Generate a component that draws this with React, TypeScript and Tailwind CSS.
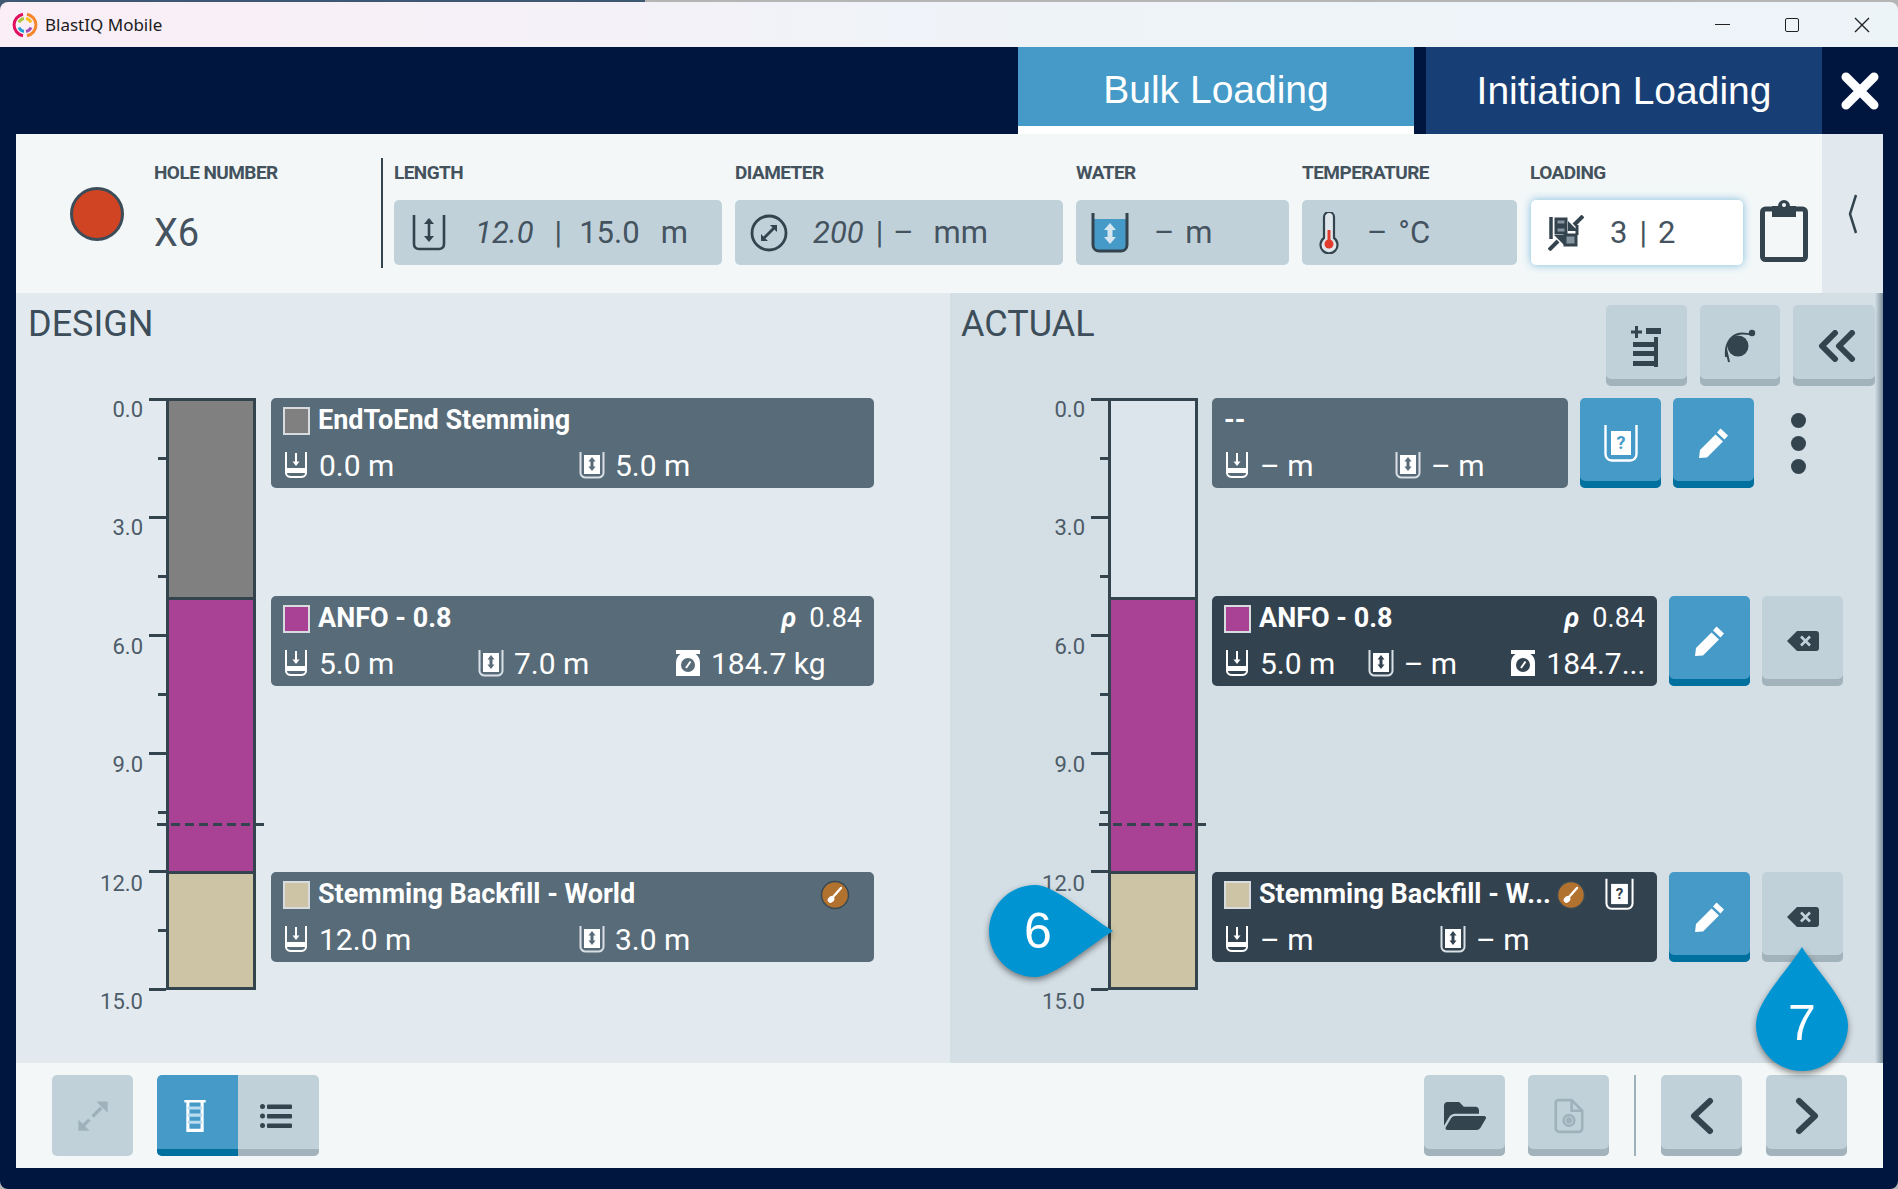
import React from 'react';
import { FaFolderOpen } from 'react-icons/fa';

const SCALE_LABELS = ['0.0', '3.0', '6.0', '9.0', '12.0', '15.0'];

function Logo() {
  return (
    <svg width="26" height="26" viewBox="0 0 26 26" fill="none">
      <path d="M11 2.2A11 11 0 0 0 11 23.8" stroke="#e0105f" strokeWidth="3" />
      <path d="M15 2.2A11 11 0 0 1 15 23.8" stroke="#f5862a" strokeWidth="3" />
      <path d="M7 10.5A6.5 6.5 0 0 1 12 6.6" stroke="#a8c83a" strokeWidth="3" />
      <path d="M14 6.6A6.5 6.5 0 0 1 19 10.5" stroke="#f4c020" strokeWidth="3" />
      <path d="M7 15.5A6.5 6.5 0 0 0 12 19.4" stroke="#1f9fd8" strokeWidth="3" />
      <path d="M14 19.4A6.5 6.5 0 0 0 19 15.5" stroke="#a04bb8" strokeWidth="3" />
    </svg>
  );
}

function CupDepthIcon() {
  return (
    <svg width="24" height="28" viewBox="0 0 24 28" fill="none" stroke="#fff" strokeWidth="2">
      <path d="M2 1v21c0 3 3 4 5 4h10c2 0 5-1 5-4V1" />
      <path d="M12 2v11" />
      <path d="M8.5 10.5 12 15l3.5-4.5z" fill="#fff" stroke="none" />
      <rect x="3" y="17" width="18" height="5" fill="#fff" stroke="none" />
    </svg>
  );
}

function CupLengthIcon({ notch }: { notch: string }) {
  return (
    <svg width="26" height="28" viewBox="0 0 26 28" fill="none" stroke="#d9e1e6" strokeWidth="2">
      <path d="M1.5 1v21c0 3 3 4.500 5 4.500h13c2 0 5-1.500 5-4.500V1" />
      <rect x="5" y="4" width="16" height="19" fill="#fff" stroke="none" />
      <path d="M13 6l3.500 4.500H14.500v5H16.500L13 20l-3.500-4.500h2v-5h-2z" fill={notch} stroke="none" />
    </svg>
  );
}

function WeightIcon({ notch }: { notch: string }) {
  return (
    <svg width="26" height="28" viewBox="0 0 26 28">
      <path d="M1 1h24v4h-4.500a11 11 0 0 1 4.500 9v13H1V14a11 11 0 0 1 4.500-9H1z" fill="#fff" />
      <circle cx="13" cy="16" r="7" fill={notch} />
      <path d="M11 19 15.500 12.500" stroke="#fff" strokeWidth="2" />
    </svg>
  );
}

function Rho() {
  return <span className="font-bold italic">ρ</span>;
}

function SpoonBadge() {
  return (
    <svg width="30" height="30" viewBox="0 0 30 30">
      <circle cx="15" cy="15" r="13.500" fill="#b1712f" stroke="#3a4a55" strokeWidth="1.500" />
      <path d="M21 8 13 17" stroke="#fff" strokeWidth="2.400" strokeLinecap="round" />
      <ellipse cx="11" cy="19.500" rx="3.600" ry="3" fill="#fff" transform="rotate(-45 11 19.500)" />
    </svg>
  );
}

function UnknownCupIcon({ width, height, mark }: { width: number; height: number; mark: string }) {
  return (
    <svg width={width} height={height} viewBox="0 0 34 38" fill="none" stroke="#fff" strokeWidth="2.400">
      <path d="M1.500 1v29c0 4 3 6.500 6 6.500h19c3 0 6-2.500 6-6.500V1" />
      <rect x="7" y="7" width="20" height="24" fill="#fff" stroke="none" />
      <text x="17" y="25" textAnchor="middle" fontSize="18" fontWeight="700" fill={mark} stroke="none" fontFamily="Roboto, sans-serif">
        ?
      </text>
    </svg>
  );
}

function PencilIcon() {
  return (
    <svg width="34" height="34" viewBox="0 0 34 34">
      <path d="M23.500 2.500 31 9.500 27.500 13.500 20 6.500z" fill="#fff" />
      <path d="M18.500 8.500 26 15.500 10 31.500 2 32 3 24z" fill="#fff" />
    </svg>
  );
}

function BackspaceIcon() {
  return (
    <svg width="32" height="20" viewBox="0 0 32 20">
      <path d="M10 0h19a3 3 0 0 1 3 3v14a3 3 0 0 1-3 3H10L0 10z" fill="#34444f" />
      <path d="M14 5.500 23 14.500M23 5.500 14 14.500" stroke="#c1d1da" strokeWidth="2.600" />
    </svg>
  );
}

function ActionButton({ tone, className, children }: { tone: 'blue' | 'grey'; className: string; children: React.ReactNode }) {
  return (
    <div
      className={`${className} ${
        tone === 'blue' ? 'bg-[#459ac8] shadow-[inset_0_-7px_0_#00709f]' : 'bg-[#c1d1da] shadow-[inset_0_-7px_0_#a2b3bc]'
      } flex items-center justify-center rounded-[5px]`}
    >
      {children}
    </div>
  );
}

function Stat({ icon, value, className }: { icon: React.ReactNode; value: string; className: string }) {
  return (
    <div className={`${className} flex items-center gap-[10px] overflow-hidden`}>
      <span className="flex w-[26px] shrink-0 justify-center">{icon}</span>
      <span className="whitespace-nowrap">{value}</span>
    </div>
  );
}

function Card({
  title,
  swatch,
  className,
  right,
  children,
}: {
  title: string;
  swatch?: string;
  className: string;
  right?: React.ReactNode;
  children: React.ReactNode;
}) {
  return (
    <div className={`${className} flex h-[90px] flex-col rounded-[5px] px-[12px] pt-[9px] text-white`}>
      <div className="flex h-[27px] items-center">
        {swatch && <span className={`${swatch} mr-[8px] h-[28px] w-[27px] shrink-0 border-2 border-[#d8dcdf]`} />}
        <span className="whitespace-nowrap text-[27px] font-bold">{title}</span>
        {right && <div className="ml-auto flex items-center text-[27px]">{right}</div>}
      </div>
      <div className="mt-[17px] flex h-[28px] items-center text-[30px]">{children}</div>
    </div>
  );
}

function Scale({ className }: { className: string }) {
  const ticks = Array.from({ length: 11 }, (_, i) => i);
  return (
    <div className={`${className} relative h-[592px] shrink-0`}>
      {ticks.map((i) => (
        <div
          key={i}
          className={`${i % 2 === 0 ? 'w-[17px]' : 'w-[8px]'} absolute right-0 h-[3px] bg-[#34444f]`}
          style={{ top: i * 59 }}
        />
      ))}
      {SCALE_LABELS.map((label, i) => (
        <div
          key={label}
          className="absolute right-[23px] text-[22px] leading-[24px] text-[#4d5c68]"
          style={{ top: i * 118.4 }}
        >
          {label}
        </div>
      ))}
    </div>
  );
}

function Bar({ topColor }: { topColor: string }) {
  return (
    <div className="relative h-[592px] w-[90px] shrink-0">
      <div className="flex h-full flex-col border-[3px] border-[#34444f]">
        <div className={`${topColor} h-[199px] border-b-[3px] border-[#34444f]`} />
        <div className="h-[274px] border-b-[3px] border-[#34444f] bg-[#a94195]" />
        <div className="flex-1 bg-[#ccc4a4]" />
      </div>
      <div className="absolute left-[-9px] top-[425px] h-[3px] w-[108px] bg-[repeating-linear-gradient(90deg,#34444f_0_9px,transparent_9px_14px)]" />
    </div>
  );
}

function FieldIconLength() {
  return (
    <svg width="34" height="36" viewBox="0 0 34 36" fill="none" stroke="#34444f" strokeWidth="2.600">
      <path d="M2 0v29c0 3 2 5 5 5h20c3 0 5-2 5-5V0" />
      <path d="M17 4v21" />
      <path d="M12 9l5-6 5 6zM12 21l5 6 5-6z" fill="#34444f" stroke="none" />
    </svg>
  );
}

function FieldIconDiameter() {
  return (
    <svg width="38" height="38" viewBox="0 0 38 38" fill="none" stroke="#34444f" strokeWidth="2.800">
      <circle cx="19" cy="19" r="17" />
      <path d="M13 25 24.500 13.500" />
      <path d="M27 11h-7l7 7zM11 27h7l-7-7z" fill="#34444f" stroke="none" />
    </svg>
  );
}

function FieldIconWater() {
  return (
    <svg width="38" height="42" viewBox="0 0 38 42" fill="none">
      <path d="M3 7h32v27c0 3-2 5-5 5H8c-3 0-5-2-5-5z" fill="#459ac8" />
      <path d="M2 1v32c0 4 3 6 6 6h22c3 0 6-2 6-6V1" stroke="#34444f" strokeWidth="3" />
      <path d="M19 11l6 7h-3.500v7H25l-6 7-6-7h3.500v-7H13z" fill="#d5e6ef" />
    </svg>
  );
}

function FieldIconThermometer() {
  return (
    <svg width="22" height="42" viewBox="0 0 22 42" fill="none">
      <path d="M6 5a5 5 0 0 1 10 0v21a8.500 8.500 0 1 1-10 0z" fill="#dfe7ec" stroke="#34444f" strokeWidth="2.200" />
      <path d="M11 18v14" stroke="#e23c2e" strokeWidth="3" />
      <circle cx="11" cy="32" r="4.500" fill="#e23c2e" />
    </svg>
  );
}

function FieldIconLoading() {
  return (
    <svg width="36" height="36" viewBox="0 0 36 36" fill="none" stroke="#34444f">
      <path d="M3 2v22" strokeWidth="3.500" />
      <path d="M8 4h10v6H8zM8 12h10v6H8z" fill="#8795a0" strokeWidth="3" />
      <path d="M17 20h11v10H17z" fill="#8795a0" strokeWidth="3" />
      <path d="M29 10v10" strokeWidth="3" />
      <path d="M35 1 26 10" strokeWidth="4" />
      <path d="M20 6v10h10z" fill="#34444f" stroke="none" />
      <path d="M1 35 10 26" strokeWidth="4" />
      <path d="M16 30V20H6z" fill="#34444f" stroke="none" />
    </svg>
  );
}

function ClipboardIcon() {
  return (
    <svg width="48" height="64" viewBox="0 0 48 64" fill="none">
      <rect x="2.500" y="11" width="43" height="50.500" rx="3" fill="#f3f7f8" stroke="#34444f" strokeWidth="5" />
      <path d="M12 8h6a6 6 0 0 1 12 0h6v11H12z" fill="#34444f" />
      <circle cx="24" cy="7" r="2" fill="#f3f7f8" />
    </svg>
  );
}

function Field({ className, children }: { className: string; children: React.ReactNode }) {
  return (
    <div className={`${className} flex h-[65px] items-center rounded-[5px] bg-[#c1d1da] text-[31px] text-[#44535f]`}>
      {children}
    </div>
  );
}

function HeaderLabel({ children }: { children: React.ReactNode }) {
  return <div className="h-[24px] text-[19px] font-bold leading-[24px] tracking-[-0.55px] text-[#44525d]">{children}</div>;
}

function HeaderColumn({ label, children }: { label: string; children: React.ReactNode }) {
  return (
    <div className="flex flex-col">
      <HeaderLabel>{label}</HeaderLabel>
      <div className="mt-[15px]">{children}</div>
    </div>
  );
}

function ButtonRow({ children }: { children: React.ReactNode }) {
  return <div className="flex h-[90px] items-stretch">{children}</div>;
}

export default function App() {
  return (
    <div className="relative flex h-[1189px] w-[1898px] flex-col overflow-hidden bg-[#b5b5b5] font-['Roboto',sans-serif]">
      {/* title bar */}
      <div className="h-[47px] shrink-0 bg-[linear-gradient(90deg,#3d5870_34%,#b5b5b5_34%)] pt-[2px]">
        <div className="flex h-[45px] items-center rounded-t-[8px] bg-gradient-to-r from-[#fbeef6] via-[#eff3f8] to-[#edf4f8] pl-[12px]">
          <Logo />
          <span className="ml-[7px] font-['Noto_Sans',sans-serif] text-[17px] text-[#1b1b1b]">BlastIQ Mobile</span>
          <div className="ml-auto flex items-center pr-[1px]">
            <div className="flex h-[45px] w-[70px] items-center justify-center">
              <div className="h-[1.5px] w-[15px] bg-[#222]" />
            </div>
            <div className="flex h-[45px] w-[70px] items-center justify-center">
              <div className="h-[14px] w-[14px] rounded-[2px] border-[1.5px] border-[#222]" />
            </div>
            <div className="flex h-[45px] w-[70px] items-center justify-center">
              <svg width="16" height="16" viewBox="0 0 16 16" stroke="#222" strokeWidth="1.400">
                <path d="M1 1l14 14M15 1 1 15" />
              </svg>
            </div>
          </div>
        </div>
      </div>

      <div className="flex flex-1 flex-col rounded-b-[8px] bg-[#00163f]">
        {/* tabs */}
        <div className="flex h-[87px] shrink-0 pl-[1018px] font-['Liberation_Sans',sans-serif] text-[39px] text-white">
          <div className="flex w-[396px] items-center justify-center border-b-[8px] border-white bg-[#459ac8] pt-[8px]">
            Bulk Loading
          </div>
          <div className="ml-[12px] flex w-[396px] items-center justify-center bg-[#183f75] pt-[2px]">Initiation Loading</div>
          <div className="flex w-[76px] items-center justify-center">
            <svg width="38" height="38" viewBox="0 0 38 38" stroke="#fff" strokeWidth="9" strokeLinecap="round">
              <path d="M5 5l28 28M33 5 5 33" />
            </svg>
          </div>
        </div>

        <div className="ml-[16px] flex h-[1034px] w-[1867px] flex-col">
          {/* hole header */}
          <div className="flex h-[159px] shrink-0 bg-[#f3f7f8]">
            <div className="flex h-full w-[365px] shrink-0">
              <div className="ml-[54px] mt-[53px] h-[54px] w-[54px] rounded-full border-[3px] border-[#3c4c58] bg-[#d04424]" />
              <div className="ml-[30px] flex flex-col pt-[27px]">
                <HeaderLabel>HOLE NUMBER</HeaderLabel>
                <div className="mt-[25px] text-[38px] leading-[46px] text-[#44535f]">X6</div>
              </div>
            </div>
            <div className="mt-[24px] h-[110px] w-[2px] shrink-0 bg-[#34444f]" />
            <div className="ml-[11px] flex gap-[13px] pt-[27px]">
              <HeaderColumn label="LENGTH">
                <Field className="w-[328px] pl-[18px] pt-[1px]">
                  <FieldIconLength />
                  <span className="ml-[29px] italic">12.0</span>
                  <span className="ml-[21px]">|</span>
                  <span className="ml-[17px]">15.0</span>
                  <span className="ml-[21px]">m</span>
                </Field>
              </HeaderColumn>
              <HeaderColumn label="DIAMETER">
                <Field className="w-[328px] pl-[15px] pt-[1px]">
                  <FieldIconDiameter />
                  <span className="ml-[25px] italic">200</span>
                  <span className="ml-[12px]">|</span>
                  <span className="ml-[10px]">–</span>
                  <span className="ml-[20px]">mm</span>
                </Field>
              </HeaderColumn>
              <HeaderColumn label="WATER">
                <Field className="w-[213px] pl-[15px] pt-[1px]">
                  <FieldIconWater />
                  <span className="ml-[25px]">–</span>
                  <span className="ml-[11px]">m</span>
                </Field>
              </HeaderColumn>
              <HeaderColumn label="TEMPERATURE">
                <Field className="w-[215px] pl-[16px] pt-[1px]">
                  <FieldIconThermometer />
                  <span className="ml-[27px]">–</span>
                  <span className="ml-[11px]">°C</span>
                </Field>
              </HeaderColumn>
              <HeaderColumn label="LOADING">
                <div className="ml-[1px] flex h-[65px] w-[212px] items-center rounded-[5px] bg-white pl-[17px] pt-[1px] text-[31px] text-[#44535f] shadow-[0_0_8px_#7cbbdc]">
                  <FieldIconLoading />
                  <span className="ml-[26px]">3</span>
                  <span className="ml-[12px]">|</span>
                  <span className="ml-[11px]">2</span>
                </div>
              </HeaderColumn>
              <div className="ml-[4px] mt-[37px]">
                <ClipboardIcon />
              </div>
            </div>
            <div className="ml-auto flex w-[61px] justify-start bg-[#e1e9ef] pl-[26px] pt-[60px]">
              <svg width="10" height="40" viewBox="0 0 10 40" fill="none" stroke="#34444f" strokeWidth="2.500">
                <path d="M8 1 2 20l6 19" />
              </svg>
            </div>
          </div>

          {/* design / actual */}
          <div className="flex h-[770px] shrink-0">
            <div className="w-[934px] shrink-0 bg-[#e2eaf0]">
              <div className="h-[105px] pl-[12px] pt-[7px] text-[36px] leading-[48px] text-[#3d4e5a]">DESIGN</div>
              <div className="flex">
                <Scale className="w-[150px]" />
                <Bar topColor="bg-[#808080]" />
                <div className="ml-[15px] flex flex-col">
                  <Card title="EndToEnd Stemming" swatch="bg-[#808080]" className="w-[603px] bg-[#586b78]">
                    <Stat className="w-[296px]" icon={<CupDepthIcon />} value="0.0 m" />
                    <Stat className="w-[280px]" icon={<CupLengthIcon notch="#586b78" />} value="5.0 m" />
                  </Card>
                  <Card
                    title="ANFO - 0.8"
                    swatch="bg-[#a94195]"
                    className="mt-[108px] w-[603px] bg-[#586b78]"
                    right={
                      <>
                        <Rho />
                        <span className="ml-[13px]">0.84</span>
                      </>
                    }
                  >
                    <Stat className="w-[195px]" icon={<CupDepthIcon />} value="5.0 m" />
                    <Stat className="w-[197px]" icon={<CupLengthIcon notch="#586b78" />} value="7.0 m" />
                    <Stat className="w-[180px]" icon={<WeightIcon notch="#586b78" />} value="184.7 kg" />
                  </Card>
                  <Card
                    title="Stemming Backfill - World"
                    swatch="bg-[#ccc4a4]"
                    className="mt-[186px] w-[603px] bg-[#586b78]"
                    right={
                      <span className="mr-[12px] flex">
                        <SpoonBadge />
                      </span>
                    }
                  >
                    <Stat className="w-[296px]" icon={<CupDepthIcon />} value="12.0 m" />
                    <Stat className="w-[280px]" icon={<CupLengthIcon notch="#586b78" />} value="3.0 m" />
                  </Card>
                </div>
              </div>
            </div>

            <div className="relative w-[933px] shrink-0 bg-[#d3dee5]">
              <div className="flex h-[105px] pt-[12px]">
                <div className="pl-[11px] pt-[1px] text-[36px] leading-[36px] text-[#3d4e5a]">ACTUAL</div>
                <div className="ml-auto flex gap-[13px] pr-[8px]">
                  <ActionButton tone="grey" className="h-[81px] w-[81px]">
                    <svg width="32" height="42" viewBox="0 0 32 42" fill="#34444f">
                      <path d="M0 5.500h11v3H0zM4 1h3v12H4zM15 3h15v6H15zM23 12h4v30H23zM2 17h24v5H2zM2 26h24v5H2zM2 36h24v5H2z" />
                    </svg>
                  </ActionButton>
                  <ActionButton tone="grey" className="h-[81px] w-[80px]">
                    <svg width="32" height="34" viewBox="0 0 32 34" fill="none">
                      <circle cx="14" cy="17" r="10.500" fill="#34444f" />
                      <path d="M2 28 C1 18 4 8 14 5 C20 3 28 7 27 4" stroke="#34444f" strokeWidth="2" />
                      <path d="M2 20l3 13" stroke="#34444f" strokeWidth="2" />
                      <circle cx="28" cy="4" r="3.200" fill="#34444f" />
                    </svg>
                  </ActionButton>
                  <ActionButton tone="grey" className="h-[81px] w-[82px] pl-[5px]">
                    <svg width="38" height="32" viewBox="0 0 38 32" fill="none" stroke="#34444f" strokeWidth="6" strokeLinecap="round" strokeLinejoin="round">
                      <path d="M17 3 4 16l13 13M34 3 21 16l13 13" />
                    </svg>
                  </ActionButton>
                </div>
              </div>
              <div className="flex">
                <Scale className="w-[158px]" />
                <Bar topColor="bg-[#dbe5eb]" />
                <div className="ml-[14px] flex flex-col">
                  <div className="flex">
                    <Card title="--" className="w-[356px] bg-[#586b78]">
                      <Stat className="w-[171px]" icon={<CupDepthIcon />} value="– m" />
                      <Stat className="w-[150px]" icon={<CupLengthIcon notch="#586b78" />} value="– m" />
                    </Card>
                    <ButtonRow>
                      <ActionButton tone="blue" className="ml-[12px] w-[81px]">
                        <UnknownCupIcon width={34} height={38} mark="#459ac8" />
                      </ActionButton>
                      <ActionButton tone="blue" className="ml-[12px] w-[81px]">
                        <PencilIcon />
                      </ActionButton>
                      <div className="ml-[37px] flex flex-col gap-[8px] pt-[15px]">
                        <div className="h-[15px] w-[15px] rounded-full bg-[#34444f]" />
                        <div className="h-[15px] w-[15px] rounded-full bg-[#34444f]" />
                        <div className="h-[15px] w-[15px] rounded-full bg-[#34444f]" />
                      </div>
                    </ButtonRow>
                  </div>
                  <div className="mt-[108px] flex">
                    <Card
                      title="ANFO - 0.8"
                      swatch="bg-[#a94195]"
                      className="w-[445px] bg-[#33424f]"
                      right={
                        <>
                          <Rho />
                          <span className="ml-[13px]">0.84</span>
                        </>
                      }
                    >
                      <Stat className="w-[144px]" icon={<CupDepthIcon />} value="5.0 m" />
                      <Stat className="w-[143px]" icon={<CupLengthIcon notch="#33424f" />} value="– m" />
                      <Stat className="w-[135px]" icon={<WeightIcon notch="#33424f" />} value="184.7..." />
                    </Card>
                    <ButtonRow>
                      <ActionButton tone="blue" className="ml-[12px] w-[81px]">
                        <PencilIcon />
                      </ActionButton>
                      <ActionButton tone="grey" className="ml-[12px] w-[81px]">
                        <BackspaceIcon />
                      </ActionButton>
                    </ButtonRow>
                  </div>
                  <div className="mt-[186px] flex">
                    <Card
                      title="Stemming Backfill - W..."
                      swatch="bg-[#ccc4a4]"
                      className="w-[445px] bg-[#33424f]"
                      right={
                        <span className="mr-[11px] flex items-center">
                          <SpoonBadge />
                          <span className="ml-[19px] mt-[-2px] flex">
                            <UnknownCupIcon width={29} height={32} mark="#33424f" />
                          </span>
                        </span>
                      }
                    >
                      <Stat className="w-[216px]" icon={<CupDepthIcon />} value="– m" />
                      <Stat className="w-[150px]" icon={<CupLengthIcon notch="#33424f" />} value="– m" />
                    </Card>
                    <ButtonRow>
                      <ActionButton tone="blue" className="ml-[12px] w-[81px]">
                        <PencilIcon />
                      </ActionButton>
                      <ActionButton tone="grey" className="ml-[12px] w-[81px]">
                        <BackspaceIcon />
                      </ActionButton>
                    </ButtonRow>
                  </div>
                </div>
              </div>
              <div className="absolute bottom-0 right-0 top-0 w-[8px] bg-gradient-to-r from-transparent to-[#7d8f9b]" />
            </div>
          </div>

          {/* footer */}
          <div className="flex h-[105px] shrink-0 items-start bg-[#f3f7f8] pt-[12px]">
            <div className="ml-[36px] flex h-[81px] w-[81px] items-center justify-center rounded-[5px] bg-[#c1d1da]">
              <svg width="36" height="36" viewBox="0 0 32 32" fill="none" stroke="#9fb2bc" strokeWidth="3">
                <path d="M5 27 27 5" strokeDasharray="11 4" />
                <path d="M19 3h10v10zM3 19v10h10z" fill="#9fb2bc" stroke="none" />
              </svg>
            </div>
            <div className="ml-[24px] flex h-[81px] w-[162px] overflow-hidden rounded-[5px]">
              <div className="flex w-[81px] items-center justify-center bg-[#459ac8] pr-[6px] shadow-[inset_0_-7px_0_#00709f]">
                <svg width="26" height="32" viewBox="0 0 26 36" fill="none" stroke="#fff" strokeWidth="3.500">
                  <path d="M1 1h24M5 1v34h16V1" />
                  <path d="M5 9h16M5 17h16M5 25h16" stroke="#b9dcee" />
                  <path d="M4 34h18" />
                </svg>
              </div>
              <div className="flex w-[81px] items-center justify-center bg-[#c1d1da] pr-[6px] shadow-[inset_0_-7px_0_#a2b3bc]">
                <svg width="32" height="26" viewBox="0 0 32 26" fill="#34444f">
                  <circle cx="2.500" cy="3.500" r="2.500" />
                  <circle cx="2.500" cy="13" r="2.500" />
                  <circle cx="2.500" cy="22.500" r="2.500" />
                  <rect x="7" y="1.500" width="25" height="4.500" rx="1" />
                  <rect x="7" y="11" width="25" height="4.500" rx="1" />
                  <rect x="7" y="20.500" width="25" height="4.500" rx="1" />
                </svg>
              </div>
            </div>
            <div className="ml-auto flex items-start pr-[36px]">
              <ActionButton tone="grey" className="h-[81px] w-[81px]">
                <FaFolderOpen className="text-[#34444f]" size={42} />
              </ActionButton>
              <div className="ml-[23px] flex h-[81px] w-[81px] items-center justify-center rounded-[5px] bg-[#c1d1da] shadow-[inset_0_-7px_0_#a2b3bc]">
                <svg width="30" height="38" viewBox="0 0 34 40" fill="none" stroke="#9fb2bc" strokeWidth="3">
                  <path d="M4 2h16l12 12v20a4 4 0 0 1-4 4H6a4 4 0 0 1-4-4V4z" />
                  <path d="M20 2v12h12" />
                  <circle cx="17" cy="25" r="6" />
                  <circle cx="17" cy="25" r="2" fill="#9fb2bc" />
                </svg>
              </div>
              <div className="ml-[25px] h-[81px] w-[2px] bg-[#9fb2bc]" />
              <ActionButton tone="grey" className="ml-[25px] h-[81px] w-[81px]">
                <svg width="28" height="38" viewBox="0 0 26 38" fill="none" stroke="#34444f" strokeWidth="6" strokeLinecap="round" strokeLinejoin="round">
                  <path d="M21 4 5 19l16 15" />
                </svg>
              </ActionButton>
              <ActionButton tone="grey" className="ml-[24px] h-[81px] w-[81px]">
                <svg width="28" height="38" viewBox="0 0 26 38" fill="none" stroke="#34444f" strokeWidth="6" strokeLinecap="round" strokeLinejoin="round">
                  <path d="M5 4l16 15L5 34" />
                </svg>
              </ActionButton>
            </div>
          </div>
        </div>
      </div>

      {/* callouts */}
      <div className="absolute left-[989px] top-[885px] h-[92px] w-[125px] drop-shadow-[0_3px_3px_rgba(0,0,0,0.45)]">
        <svg width="125" height="92" viewBox="0 0 125 92" className="absolute left-0 top-0">
          <path d="M46 0C66 0 98 30 124 46 98 62 66 92 46 92A46 46 0 0 1 46 0z" fill="#0095d2" />
        </svg>
        <div className="absolute left-0 top-0 flex h-[92px] w-[98px] items-center justify-center font-['Liberation_Sans',sans-serif] text-[50px] text-white">
          6
        </div>
      </div>
      <div className="absolute left-[1756px] top-[947px] h-[124px] w-[92px] drop-shadow-[0_3px_3px_rgba(0,0,0,0.45)]">
        <svg width="92" height="124" viewBox="0 0 92 124" className="absolute left-0 top-0">
          <path d="M46 0C62 26 92 54 92 78A46 46 0 0 1 0 78C0 54 30 26 46 0z" fill="#0095d2" />
        </svg>
        <div className="absolute left-0 top-[46px] flex h-[60px] w-[92px] items-center justify-center font-['Liberation_Sans',sans-serif] text-[50px] text-white">
          7
        </div>
      </div>
    </div>
  );
}
